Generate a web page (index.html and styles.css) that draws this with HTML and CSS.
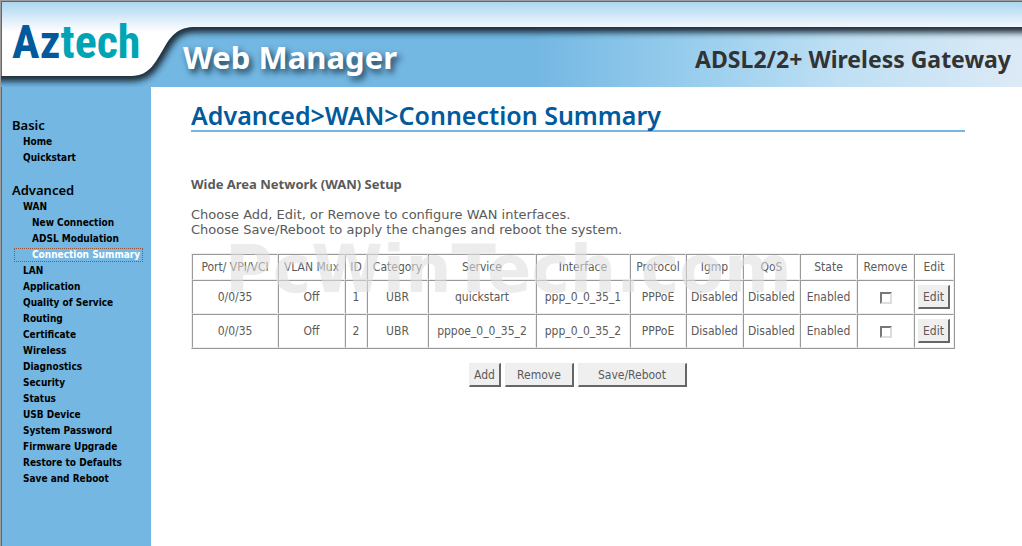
FILE: index.html
```html
<!DOCTYPE html>
<html lang="en">
<head>
  <meta charset="UTF-8" />
  <meta name="viewport" content="width=device-width, initial-scale=1.0" />
  <title>Aztech Web Manager</title>
  <link rel="stylesheet" href="styles.css">
</head>
<body>

  <header class="header">
    <svg class="header-bg" aria-hidden="true">
      <defs>
        <linearGradient id="fade">
          <stop offset="0" stop-color="#73b7e3" />
          <stop offset="0.52" stop-color="#73b7e3" />
          <stop offset="0.69" stop-color="#9bcfee" />
          <stop offset="0.82" stop-color="#bedff4" />
          <stop offset="1" stop-color="#dceaf6" />
        </linearGradient>
        <clipPath id="wave">
          <path d="M-20 76H132C150 76 156 61 164 48C172 34 179 27 196 27H4000V120H-20Z" />
        </clipPath>
        <filter id="soft" filterUnits="userSpaceOnUse" x="-40" y="0" width="4080" height="120">
          <feGaussianBlur stdDeviation="3" />
        </filter>
      </defs>
      <g clip-path="url(#wave)">
        <rect width="100%" height="100%" fill="url(#fade)" />
        <path d="M-20 76H132C150 76 156 61 164 48C172 34 179 27 196 27H4000" fill="none" stroke="#1c2b36" stroke-width="11" filter="url(#soft)" />
      </g>
    </svg>
    <div class="logo"><span class="logo-az">Az</span>tech</div>
    <div class="app-name">Web Manager</div>
    <div class="product">ADSL2/2+ Wireless Gateway</div>
  </header>

  <div class="page">
    <nav class="sidebar">
      <h2>Basic</h2>
      <ul>
        <li><a href="#">Home</a></li>
        <li><a href="#">Quickstart</a></li>
      </ul>
      <h2>Advanced</h2>
      <ul>
        <li><a href="#">WAN</a></li>
        <li><a class="sub" href="#">New Connection</a></li>
        <li><a class="sub" href="#">ADSL Modulation</a></li>
        <li><a class="sub active" href="#">Connection Summary</a></li>
        <li><a href="#">LAN</a></li>
        <li><a href="#">Application</a></li>
        <li><a href="#">Quality of Service</a></li>
        <li><a href="#">Routing</a></li>
        <li><a href="#">Certificate</a></li>
        <li><a href="#">Wireless</a></li>
        <li><a href="#">Diagnostics</a></li>
        <li><a href="#">Security</a></li>
        <li><a href="#">Status</a></li>
        <li><a href="#">USB Device</a></li>
        <li><a href="#">System Password</a></li>
        <li><a href="#">Firmware Upgrade</a></li>
        <li><a href="#">Restore to Defaults</a></li>
        <li><a href="#">Save and Reboot</a></li>
      </ul>
    </nav>

    <main class="content">
      <h1>Advanced&gt;WAN&gt;Connection Summary</h1>
      <h3>Wide Area Network (WAN) Setup</h3>
      <p>Choose Add, Edit, or Remove to configure WAN interfaces.<br>Choose Save/Reboot to apply the changes and reboot the system.</p>

      <form class="wan-form">
        <div class="watermark">PcWinTech.com</div>
        <table>
          <colgroup>
            <col class="col-port">
            <col class="col-vlan">
            <col class="col-id">
            <col class="col-category">
            <col class="col-service">
            <col class="col-interface">
            <col class="col-protocol">
            <col class="col-state" span="4">
            <col class="col-edit">
          </colgroup>
          <tr>
            <th>Port/ VPI/VCI</th>
            <th>VLAN Mux</th>
            <th>ID</th>
            <th>Category</th>
            <th>Service</th>
            <th>Interface</th>
            <th>Protocol</th>
            <th>Igmp</th>
            <th>QoS</th>
            <th>State</th>
            <th>Remove</th>
            <th>Edit</th>
          </tr>
          <tr>
            <td>0/0/35</td>
            <td>Off</td>
            <td>1</td>
            <td>UBR</td>
            <td>quickstart</td>
            <td>ppp_0_0_35_1</td>
            <td>PPPoE</td>
            <td>Disabled</td>
            <td>Disabled</td>
            <td>Enabled</td>
            <td><input type="checkbox" aria-label="Remove quickstart"></td>
            <td><button type="button">Edit</button></td>
          </tr>
          <tr>
            <td>0/0/35</td>
            <td>Off</td>
            <td>2</td>
            <td>UBR</td>
            <td>pppoe_0_0_35_2</td>
            <td>ppp_0_0_35_2</td>
            <td>PPPoE</td>
            <td>Disabled</td>
            <td>Disabled</td>
            <td>Enabled</td>
            <td><input type="checkbox" aria-label="Remove pppoe_0_0_35_2"></td>
            <td><button type="button">Edit</button></td>
          </tr>
        </table>
        <div class="buttons">
          <button type="button">Add</button>
          <button type="button" class="medium">Remove</button>
          <button type="button" class="wide">Save/Reboot</button>
        </div>
      </form>
    </main>
  </div>

</body>
</html>
```

FILE: styles.css
```css
* {
  box-sizing: border-box;
}

body {
  margin: 0;
  min-height: 100vh;
  display: flex;
  flex-direction: column;
  border-top: 1px solid #9c9c9c;
  border-left: 1px solid #9c9c9c;
  background: white;
  color: #5a5a5a;
  font-family: "DejaVu Sans Condensed", Tahoma, sans-serif;
  font-size: 12px;
}

.header {
  position: relative;
  display: flex;
  align-items: flex-start;
  height: 86px;
  border-top: 1px solid #666;
  border-left: 1px solid #666;
  background: linear-gradient(#acd6f0, #eff6fc 24px, white 30px);
}

.header-bg {
  position: absolute;
  top: -2px;
  left: -2px;
  width: calc(100% + 2px);
  height: 87px;
}

.logo,
.app-name,
.product {
  position: relative;
  font-weight: bold;
  white-space: nowrap;
}

.logo {
  width: 181px;
  padding-left: 10px;
  color: #00a5b5;
  font-family: "Roboto Condensed", Roboto, sans-serif;
  font-size: 46px;
  line-height: 80px;
}

.logo-az {
  color: #005a9c;
}

.app-name {
  padding-top: 32px;
  color: white;
  font-family: "Noto Sans", sans-serif;
  font-size: 31px;
  line-height: 46px;
  text-shadow: 3px 4px 6px #1d3e55;
}

.product {
  margin-left: auto;
  padding: 34px 11px 0 0;
  color: #333;
  font-family: "Noto Sans", sans-serif;
  font-size: 23px;
  line-height: 46px;
}

.page {
  flex: 1;
  display: flex;
  border-left: 1px solid #666;
}

.sidebar {
  width: 149px;
  padding-top: 30px;
  background: #73b7e2;
  color: black;
}

.sidebar h2 {
  margin: 0;
  padding-left: 10px;
  font-family: "Noto Sans", sans-serif;
  font-size: 13px;
  font-weight: 600;
  line-height: 17px;
}

.sidebar ul {
  margin: 0 0 16px;
  padding: 0;
  list-style: none;
}

.sidebar a {
  display: block;
  margin: 0 7px 0 11px;
  padding-left: 10px;
  color: black;
  font-size: 10px;
  font-weight: bold;
  line-height: 16px;
  text-decoration: none;
  white-space: nowrap;
}

.sidebar a.sub {
  padding-left: 19px;
}

.sidebar a.active {
  color: white;
  outline: 1px dotted #96543a;
  outline-offset: -2px;
}

.content {
  flex: 1;
  padding: 13px 57px 20px 40px;
}

.content h1 {
  margin: 0 0 45px;
  border-bottom: 2px solid #73b7e2;
  color: #005a9c;
  font-family: "Noto Sans", sans-serif;
  font-size: 25px;
  font-weight: 600;
  line-height: 30px;
}

.content h3 {
  margin: 0 0 15px;
  font-family: "Noto Sans", sans-serif;
  font-size: 13px;
  font-weight: bold;
  line-height: 15px;
}

.content p {
  margin: 0 0 16px;
  font-family: "DejaVu Sans", Verdana, sans-serif;
  font-size: 13px;
  line-height: 15px;
}

.wan-form {
  position: relative;
}

.watermark {
  position: absolute;
  z-index: 1;
  top: -20px;
  left: 34px;
  color: rgba(222, 222, 222, 0.58);
  font-family: "DejaVu Sans", sans-serif;
  font-size: 65px;
  font-weight: bold;
  line-height: 74px;
  pointer-events: none;
}

table {
  border: 1px solid;
  border-color: #eee #999 #999 #eee;
  border-spacing: 0;
}

.col-port {
  width: 86px;
}

.col-vlan {
  width: 67px;
}

.col-id {
  width: 22px;
}

.col-category {
  width: 61px;
}

.col-service {
  width: 108px;
}

.col-interface {
  width: 94px;
}

.col-protocol {
  width: 56px;
}

.col-state {
  width: 57px;
}

.col-edit {
  width: 40px;
}

th,
td {
  height: 34px;
  padding: 0 3px;
  border: 1px solid;
  border-color: #999 #eee #eee #999;
  font-weight: normal;
  text-align: center;
  white-space: nowrap;
}

th {
  height: 26px;
}

button {
  height: 24px;
  padding: 0 4px;
  border: 1px solid;
  border-color: #eee #666 #666 #eee;
  border-right-width: 2px;
  border-bottom-width: 2px;
  background: #efefef;
  color: #5a5a5a;
  font: inherit;
}

input[type="checkbox"] {
  appearance: none;
  width: 12px;
  height: 12px;
  margin: 0;
  border: 2px solid;
  border-color: #777 #ddd #ddd #777;
  background: white;
  vertical-align: middle;
}

.buttons {
  display: flex;
  justify-content: center;
  gap: 4px;
  margin-top: 14px;
}

.medium {
  width: 69px;
}

.wide {
  width: 109px;
}
```
